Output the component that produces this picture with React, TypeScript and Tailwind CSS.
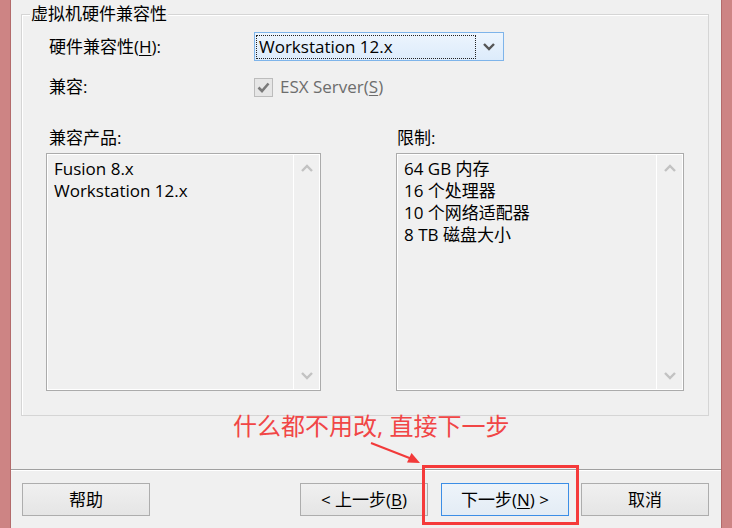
import React from "react";

const F = "font-['Open_Sans','Noto_Sans_CJK_SC',sans-serif]";

function ChevronUp() {
  return (
    <svg width="12" height="8" viewBox="0 0 12 8">
      <path d="M1 7 L6 2 L11 7" fill="none" stroke="#c2c2c2" strokeWidth="2.4" />
    </svg>
  );
}
function ChevronDown({ color = "#c2c2c2" }: { color?: string }) {
  return (
    <svg width="12" height="8" viewBox="0 0 12 8">
      <path d="M1 1 L6 6 L11 1" fill="none" stroke={color} strokeWidth="2.4" />
    </svg>
  );
}

function ListBox({ width, items }: { width: string; items: string[] }) {
  return (
    <div
      className={`${width} h-[238px] border border-[#ababab] shadow-[inset_1px_1px_0_#ffffff,inset_-1px_-1px_0_#ffffff] flex bg-[#f0f0f0]`}
    >
      <div className="flex-1 pl-[7px] pt-[4px] flex flex-col">
        {items.map((t) => (
          <div key={t} className="h-[22px] leading-[22px] text-[17px] text-[#000] whitespace-nowrap">
            {t}
          </div>
        ))}
      </div>
      <div className="w-[27px] border-l border-white flex flex-col items-center justify-between pt-[10px] pb-[10px]">
        <ChevronUp />
        <ChevronDown />
      </div>
    </div>
  );
}

function Btn({ children, primary = false }: { children: React.ReactNode; primary?: boolean }) {
  return (
    <div
      className={`w-[128px] h-[33px] flex items-center justify-center text-[17px] text-black border ${
        primary
          ? "border-[#3c8ee6] bg-gradient-to-b from-[#eef4fa] to-[#e3ecf5]"
          : "border-[#adadad] bg-gradient-to-b from-[#f0f0f0] to-[#e5e5e5]"
      }`}
    >
      {children}
    </div>
  );
}

export default function App() {
  return (
    <div className={`w-[732px] h-[528px] flex overflow-hidden ${F} relative`}>
      {/* left window frame */}
      <div className="w-[10px] h-full bg-[#cd8484]" />
      <div className="w-[1px] h-full bg-[#b36b6b]" />

      {/* content */}
      <div className="w-[710px] h-full bg-[#f0f0f0] flex flex-col">
        <div className="pt-[14px] pl-[10px]">
          <div className="relative w-[688px] h-[402px] border border-[#d5d5d5] shadow-[inset_1px_1px_0_#ffffff]">
            <span className="absolute left-[8px] top-[-11px] px-[1px] bg-[#f0f0f0] text-[17px] leading-[20px] text-[#000]">
              虚拟机硬件兼容性
            </span>

            {/* row 1 */}
            <div className="mt-[17px] h-[29px] flex items-center">
              <div className="w-[232px] pl-[27px] text-[17px] text-black">
                硬件兼容性(<span className="underline underline-offset-2">H</span>):
              </div>
              <div className="w-[250px] h-[29px] border border-[#7eb4ea] bg-gradient-to-b from-[#edf5fd] to-[#dcebfb] flex items-center">
                <div className="ml-[1px] w-[220px] h-[24px] border border-dotted border-[#222] flex items-center pl-[2px] text-[17px] text-black">
                  Workstation 12.x
                </div>
                <div className="flex-1 flex items-center justify-center pt-[1px] pr-[2px]">
                  <ChevronDown color="#555" />
                </div>
              </div>
            </div>

            {/* row 2 */}
            <div className="mt-[16px] h-[20px] flex items-center">
              <div className="w-[232px] pl-[27px] text-[17px] text-black">兼容:</div>
              <div className="w-[19px] h-[19px] border border-[#bcbcbc] bg-[#e6e6e6] flex items-center justify-center">
                <svg width="13" height="11" viewBox="0 0 13 11">
                  <path d="M1.5 5.5 L5 9 L11.5 1.5" fill="none" stroke="#7a7a7a" strokeWidth="2.6" />
                </svg>
              </div>
              <div className="ml-[7px] text-[17px] text-[#6d6d6d]">
                ESX Server(<span className="underline underline-offset-2">S</span>)
              </div>
            </div>

            {/* row 3 labels */}
            <div className="mt-[31px] h-[20px] flex text-[17px] leading-[20px] text-black">
              <div className="w-[375px] pl-[27px]">兼容产品:</div>
              <div>限制:</div>
            </div>

            {/* lists */}
            <div className="mt-[5px] flex pl-[24px] gap-[75px]">
              <ListBox width="w-[275px]" items={["Fusion 8.x", "Workstation 12.x"]} />
              <ListBox
                width="w-[288px]"
                items={["64 GB 内存", "16 个处理器", "10 个网络适配器", "8 TB 磁盘大小"]}
              />
            </div>
          </div>
        </div>

        <div className="h-[53px]" />
        <div className="h-[2px] border-t border-[#a0a0a0] border-b border-b-white" />

        <div className="mt-[12px] flex pl-[11px]">
          <Btn>帮助</Btn>
          <div className="ml-[150px]">
            <Btn>
              &lt; 上一步(<span className="underline underline-offset-2">B</span>)
            </Btn>
          </div>
          <div className="ml-[13px]">
            <Btn primary>
              下一步(<span className="underline underline-offset-2">N</span>) &gt;
            </Btn>
          </div>
          <div className="ml-[12px]">
            <Btn>取消</Btn>
          </div>
        </div>
      </div>

      {/* right window frame */}
      <div className="w-[1px] h-full bg-[#b36b6b]" />
      <div className="flex-1 h-full bg-[#cd8484]" />

      {/* annotations */}
      <div className="absolute left-[233px] top-[412px] text-[24px] leading-[28px] text-[#f14646] whitespace-nowrap">
        什么都不用改, 直接下一步
      </div>
      <svg className="absolute left-[366px] top-[438px]" width="60" height="30" viewBox="0 0 60 30">
        <line x1="5" y1="5" x2="46" y2="21" stroke="#f23a3a" strokeWidth="2" />
        <path d="M54 25 L41 24.5 L45.5 15 Z" fill="#f23a3a" />
      </svg>
      <div className="absolute left-[422px] top-[465px] w-[157px] h-[60px] border-[3px] border-[#f53a3a]" />
    </div>
  );
}
